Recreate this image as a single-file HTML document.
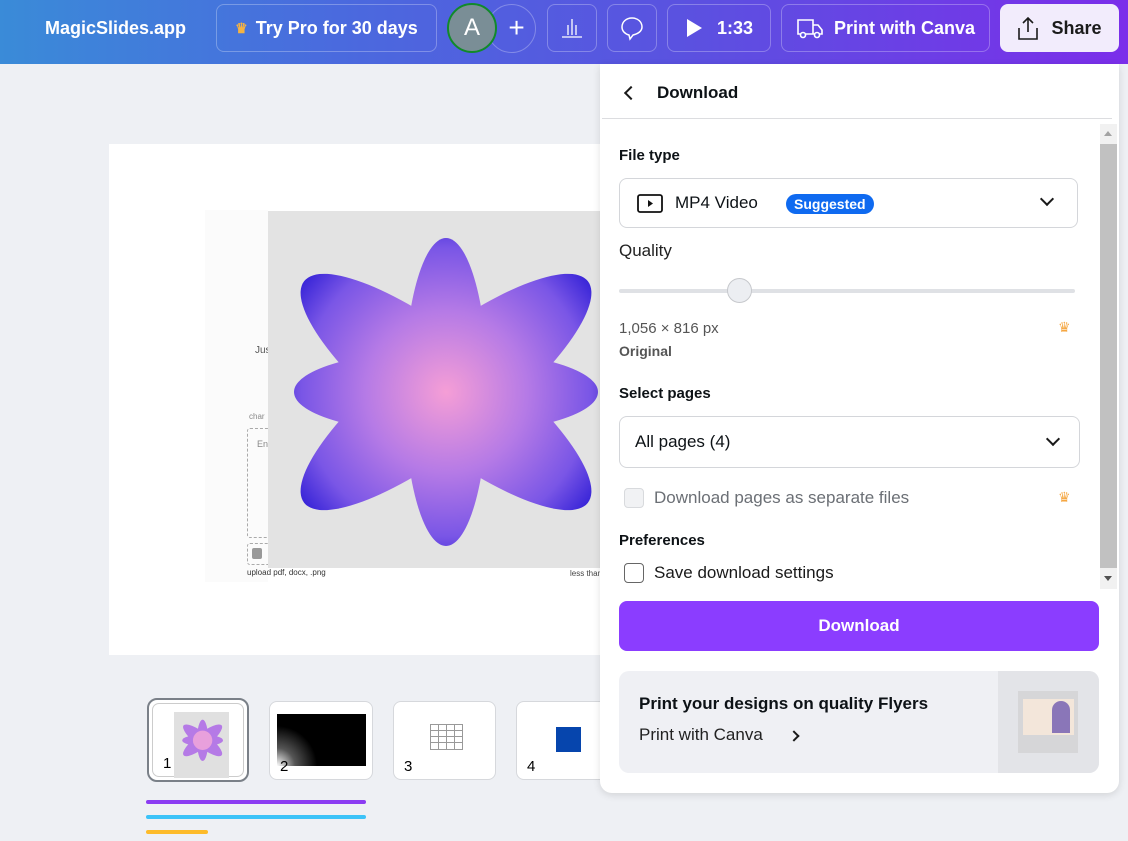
<!DOCTYPE html>
<html><head><meta charset="utf-8"><style>
*{box-sizing:border-box;margin:0;padding:0}
body{width:1128px;height:841px;overflow:hidden;background:#eef0f4;font-family:"Liberation Sans",sans-serif;position:relative;color:#0d1216}
.hdr{position:absolute;left:0;top:0;width:1128px;height:64px;background:linear-gradient(90deg,#3a8bd8 0%,#4a6ade 30%,#5a52e0 60%,#7b2eea 100%)}
.hb{position:absolute;top:4px;height:48px;border:1px solid rgba(255,255,255,.28);border-radius:8px;color:#fff;font-weight:bold;font-size:18px;display:flex;align-items:center;justify-content:center;gap:8px}
.abs{position:absolute}
.panel{position:absolute;left:600px;top:64px;width:519px;height:729px;background:#fff;border-radius:0 0 12px 12px;box-shadow:0 2px 8px rgba(0,0,0,.12)}
.lbl{position:absolute;left:19px;font-size:15px;font-weight:bold;color:#0d1216}
.sel{position:absolute;left:19px;border:1px solid #d4d6da;border-radius:8px;background:#fff}
.chev{position:absolute;width:10px;height:10px;border-right:2px solid #1a1a1a;border-bottom:2px solid #1a1a1a;transform:rotate(45deg)}
.cb{position:absolute;width:20px;height:20px;border-radius:4px}
.crown{position:absolute;color:#f5a742;font-size:14px}
.thumb{position:absolute;top:701px;height:79px;background:#fff;border:1px solid #d6d8dc;border-radius:8px}
.tn{position:absolute;left:10px;bottom:4px;font-size:15px;color:#000}
</style></head><body>
<div class="hdr"></div>
<div class="abs" style="left:45px;top:18px;color:#fff;font-weight:bold;font-size:18px">MagicSlides.app</div>
<div class="hb" style="left:216px;width:221px"><span style="color:#f5b342;font-size:14px">♛</span>Try Pro for 30 days</div>
<div class="abs" style="left:487px;top:4px;width:49px;height:49px;border-radius:50%;border:1px solid rgba(255,255,255,.28);color:#fff;font-size:28px;text-align:center;line-height:46px;padding-left:10px">+</div>
<div class="abs" style="left:447px;top:3px;width:50px;height:50px;border-radius:50%;background:#7a8e96;border:2px solid #118a2a;color:#fff;font-size:24px;text-align:center;line-height:46px">A</div>
<div class="hb" style="left:547px;width:50px"><svg width="24" height="22" viewBox="0 0 24 22" fill="none" stroke="#fff" stroke-width="1.3"><path d="M2 20H22M8 18V8M12 18V2M16 18V8"/></svg></div>
<div class="hb" style="left:607px;width:50px"><svg width="26" height="26" viewBox="0 0 26 26" fill="none" stroke="#fff" stroke-width="1.5"><path d="M13 3C7 3 3 7 3 12c0 4 3 7 7 8l1 4 3-4c5-1 9-4 9-8 0-5-4-9-10-9z"/></svg></div>
<div class="hb" style="left:667px;width:104px;gap:14px"><svg width="18" height="22" viewBox="0 0 18 22"><path d="M2 2L17 11 2 20Z" fill="#fff"/></svg>1:33</div>
<div class="hb" style="left:781px;width:209px;gap:10px"><svg width="28" height="24" viewBox="0 0 28 24" fill="none" stroke="#fff" stroke-width="1.6"><path d="M2 4h15v14H2zM17 9h5l4 5v4h-9"/><circle cx="7" cy="19" r="2.5" fill="#5a4fe0"/><circle cx="21" cy="19" r="2.5" fill="#5a4fe0"/></svg>Print with Canva</div>
<div class="hb" style="left:1000px;width:119px;background:#f2ecfc;color:#1b1b1b;border-color:#f2ecfc;gap:12px;font-weight:normal"><svg width="22" height="26" viewBox="0 0 22 26" fill="none" stroke="#1b1b1b" stroke-width="1.6"><path d="M11 17V3M6 8l5-5 5 5M2 13v11h18V13"/></svg><b style="font-size:18px">Share</b></div>

<!-- slide -->
<div class="abs" style="left:109px;top:144px;width:500px;height:511px;background:#fff"></div>
<div class="abs" style="left:205px;top:210px;width:63px;height:372px;background:#fbfbfb"></div>
<div class="abs" style="left:255px;top:345px;font-size:10px;color:#555">Jus</div>
<div class="abs" style="left:249px;top:412px;font-size:8px;color:#888">char</div>
<div class="abs" style="left:247px;top:428px;width:30px;height:110px;border:1px dashed #aaa;border-radius:3px"></div>
<div class="abs" style="left:257px;top:439px;font-size:9px;color:#888">En</div>
<div class="abs" style="left:247px;top:543px;width:30px;height:22px;border:1px dashed #aaa;border-radius:3px"></div>
<div class="abs" style="left:252px;top:548px;width:10px;height:11px;background:#999;border-radius:2px"></div>
<div class="abs" style="left:247px;top:568px;font-size:8px;color:#333">upload pdf, docx, .png</div>
<div class="abs" style="left:570px;top:569px;font-size:8px;color:#444">less than</div>
<div class="abs" style="left:268px;top:211px;width:332px;height:357px;background:#e3e3e3"></div>
<svg class="abs" style="left:268px;top:211px" width="332" height="357" viewBox="268 211 332 357">
<defs><radialGradient id="g" cx="446" cy="392" r="180" gradientUnits="userSpaceOnUse"><stop offset="0" stop-color="#f59ed6"/><stop offset=".45" stop-color="#b57ae6"/><stop offset=".8" stop-color="#7a56e6"/><stop offset="1" stop-color="#3a26d8"/></radialGradient></defs>
<g fill="url(#g)">
<ellipse cx="446" cy="392" rx="152" ry="42"/>
<ellipse cx="446" cy="392" rx="42" ry="154"/>
<ellipse cx="446" cy="392" rx="180" ry="52" transform="rotate(-38 446 392)"/>
<ellipse cx="446" cy="392" rx="180" ry="52" transform="rotate(38 446 392)"/>
<circle cx="446" cy="392" r="72"/>
</g></svg>

<!-- thumbnails -->
<div class="thumb" style="left:147px;top:698px;width:102px;height:84px;border:2px solid #7a8088;border-radius:10px;padding:3px"><div style="width:100%;height:100%;border:1px solid #ccc;border-radius:7px;background:#fff;position:relative">
<div class="abs" style="left:21px;top:8px;width:55px;height:66px;background:#e0e0e0"></div>
<svg class="abs" style="left:22px;top:12px" width="52" height="48" viewBox="268 211 332 357"><g fill="#b57ae6"><ellipse cx="446" cy="392" rx="152" ry="42"/><ellipse cx="446" cy="392" rx="42" ry="154"/><ellipse cx="446" cy="392" rx="180" ry="52" transform="rotate(-38 446 392)"/><ellipse cx="446" cy="392" rx="180" ry="52" transform="rotate(38 446 392)"/><circle cx="446" cy="392" r="72" fill="#e8a0dc"/></g></svg>
<div class="tn" style="left:10px;bottom:4px">1</div></div></div>
<div class="thumb" style="left:269px;width:104px"><div class="abs" style="left:7px;top:12px;width:89px;height:52px;background:radial-gradient(circle at 0 100%,#fff 0,#555 18px,#000 40px)"></div><div class="tn">2</div></div>
<div class="thumb" style="left:393px;width:103px"><svg class="abs" style="left:36px;top:22px" width="33" height="26"><g stroke="#999" fill="none"><rect x=".5" y=".5" width="32" height="25"/><path d="M8.5 0v26M16.5 0v26M24.5 0v26M0 6.5h33M0 12.5h33M0 18.5h33"/></g></svg><div class="tn">3</div></div>
<div class="thumb" style="left:516px;width:100px"><div class="abs" style="left:39px;top:25px;width:25px;height:25px;background:#0645ad"></div><div class="tn">4</div></div>
<div class="abs" style="left:146px;top:800px;width:220px;height:4px;border-radius:2px;background:#8b3cf2"></div>
<div class="abs" style="left:146px;top:815px;width:220px;height:4px;border-radius:2px;background:#3cc3f8"></div>
<div class="abs" style="left:146px;top:830px;width:62px;height:4px;border-radius:2px;background:#fdbb2a"></div>

<!-- panel -->
<div class="panel">
<div class="chev" style="left:26px;top:24px;transform:rotate(135deg)"></div>
<div class="abs" style="left:57px;top:19px;font-size:17px;font-weight:bold">Download</div>
<div class="abs" style="left:2px;top:54px;width:510px;height:1px;background:#dcdde0"></div>
<div class="abs" style="left:500px;top:60px;width:17px;height:465px;background:#f1f1f1"></div>
<div class="abs" style="left:500px;top:80px;width:17px;height:424px;background:#c1c1c1"></div>
<div class="abs" style="left:504px;top:67px;border:4px solid transparent;border-bottom:5px solid #a3a3a3;border-top:none"></div>
<div class="abs" style="left:504px;top:512px;border:4px solid transparent;border-top:5px solid #505050;border-bottom:none"></div>
<div class="lbl" style="top:83px">File type</div>
<div class="sel" style="top:114px;width:459px;height:50px">
<svg class="abs" style="left:17px;top:15px" width="26" height="19"><rect x="1" y="1" width="24" height="17" rx="2" fill="none" stroke="#111" stroke-width="1.8"/><path d="M11 6l5 3.5-5 3.5z" fill="#111"/></svg>
<div class="abs" style="left:55px;top:14px;font-size:17px">MP4 Video</div>
<div class="abs" style="left:166px;top:15px;height:20px;padding:0 8px;border-radius:10px;background:#0f6af0;color:#fff;font-size:14px;font-weight:bold;line-height:20px">Suggested</div>
<div class="chev" style="left:422px;top:15px"></div></div>
<div class="abs" style="left:19px;top:177px;font-size:17px;color:#222">Quality</div>
<div class="abs" style="left:19px;top:225px;width:456px;height:4px;border-radius:2px;background:#dfe1e5"></div>
<div class="abs" style="left:127px;top:214px;width:25px;height:25px;border-radius:50%;background:#eceef2;border:1px solid #c6c8cc"></div>
<div class="abs" style="left:19px;top:256px;font-size:15px;color:#555">1,056 × 816 px</div>
<div class="crown" style="left:458px;top:255px">♛</div>
<div class="abs" style="left:19px;top:279px;font-size:14px;color:#555;font-weight:bold">Original</div>
<div class="lbl" style="top:321px">Select pages</div>
<div class="sel" style="top:352px;width:461px;height:52px">
<div class="abs" style="left:15px;top:15px;font-size:17px">All pages (4)</div>
<div class="chev" style="left:428px;top:17px"></div></div>
<div class="cb" style="left:24px;top:424px;background:#f1f2f4;border:1px solid #d8dadd"></div>
<div class="abs" style="left:54px;top:424px;font-size:17px;color:#6b6f75">Download pages as separate files</div>
<div class="crown" style="left:458px;top:425px">♛</div>
<div class="lbl" style="top:468px">Preferences</div>
<div class="cb" style="left:24px;top:499px;border:1.5px solid #666"></div>
<div class="abs" style="left:54px;top:499px;font-size:17px;color:#1a1a1a">Save download settings</div>
<div class="abs" style="left:19px;top:537px;width:480px;height:50px;border-radius:8px;background:#8b3dff;color:#fff;font-size:17px;font-weight:bold;text-align:center;line-height:50px">Download</div>
<div class="abs" style="left:19px;top:607px;width:480px;height:102px;border-radius:10px;background:#eff0f4;overflow:hidden">
<div class="abs" style="left:20px;top:23px;font-size:17px;font-weight:bold">Print your designs on quality Flyers</div>
<div class="abs" style="left:20px;top:54px;font-size:17px;color:#222">Print with Canva</div>
<div class="chev" style="left:171px;top:61px;transform:rotate(-45deg);width:8px;height:8px"></div>
<div class="abs" style="left:379px;top:0;width:101px;height:102px;background:#e3e4e8"></div>
<div class="abs" style="left:399px;top:20px;width:60px;height:62px;background:#d6d6d8"></div>
<div class="abs" style="left:404px;top:28px;width:51px;height:36px;background:#f3e6da"></div>
<div class="abs" style="left:433px;top:30px;width:18px;height:32px;border-radius:9px 9px 0 0;background:#8a76b8"></div>
</div>
</div>
</body></html>
